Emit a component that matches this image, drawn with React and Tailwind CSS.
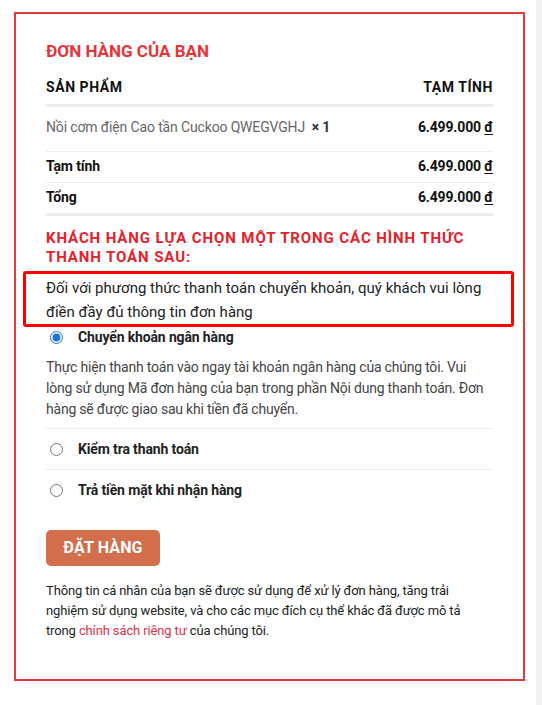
import React from 'react';

const rows = [
  { label: 'Tạm tính', value: '6.499.000', thick: false },
  { label: 'Tổng', value: '6.499.000', thick: true },
];

const Price = ({ value }) => (
  <span className="font-bold text-[#111]">
    {value} <span className="underline underline-offset-2">đ</span>
  </span>
);

const Radio = ({ label, checked }) => (
  <label className="flex items-center leading-[20px]">
    <input
      type="radio"
      name="payment"
      defaultChecked={checked}
      className="m-0 ml-[4px] h-[13px] w-[13px] accent-[#1a73e8]"
    />
    <span className="ml-[15px] text-[14px] font-bold tracking-[-0.01em] text-[#222]">{label}</span>
  </label>
);

const App = () => {
  return (
    <div className="flex min-h-screen bg-white font-['Roboto',sans-serif]">
      <div className="flex-1 pl-[14px] pt-[12px] pb-[25px]">
        <div className="w-[511px] border-2 border-[#e13a3a] px-[30px] pt-[25px] pb-[38px]">
          <h3 className="text-[17px] font-bold leading-[24px] text-[#e5343a]">ĐƠN HÀNG CỦA BẠN</h3>

          {/* order table */}
          <div className="mt-[14px] flex justify-between border-b-[3px] border-[#ececec] pb-[7px] text-[14px] font-bold uppercase leading-[20px] tracking-[0.04em] text-[#111]">
            <span>Sản phẩm</span>
            <span>Tạm tính</span>
          </div>
          <div className="flex justify-between border-b border-[#ececec] pt-[10px] pb-[14px] text-[14px] leading-[20px] tracking-[-0.01em]">
            <span className="text-[#666]">
              Nồi cơm điện Cao tần Cuckoo QWEGVGHJ&nbsp; <strong className="text-[#333]">× 1</strong>
            </span>
            <Price value="6.499.000" />
          </div>
          {rows.map((r) => (
            <div
              key={r.label}
              className={`flex justify-between pt-[4px] pb-[6px] text-[14px] leading-[20px] tracking-[-0.01em] ${
                r.thick ? 'border-b-[3px]' : 'border-b'
              } border-[#ececec]`}
            >
              <span className="font-bold text-[#111]">{r.label}</span>
              <Price value={r.value} />
            </div>
          ))}

          {/* payment methods */}
          <h4 className="mt-[13px] text-[15px] font-bold uppercase leading-[19px] tracking-[0.06em] text-[#e5202a]">
            Khách hàng lựa chọn một trong các hình thức thanh toán sau:
          </h4>
          <div className="mt-[4px] -ml-[23px] -mr-[21px] rounded-[3px] border-[3px] border-[#ff0000] pl-[20px] pt-[2px] text-[15px] leading-[24px] text-[#222]">
            Đối với phương thức thanh toán chuyển khoản, quý khách vui lòng điền đầy đủ thông tin đơn hàng
          </div>

          <div className="border-b border-[#ececec] pb-[8px]">
            <Radio label="Chuyển khoản ngân hàng" checked />
            <p className="mt-[10px] text-[14px] leading-[21px] tracking-[-0.015em] text-[#444]">
              Thực hiện thanh toán vào ngay tài khoản ngân hàng của chúng tôi. Vui lòng sử dụng Mã đơn hàng của bạn trong phần Nội dung thanh toán. Đơn hàng sẽ được giao sau khi tiền đã chuyển.
            </p>
          </div>
          <div className="border-b border-[#ececec] py-[10px]">
            <Radio label="Kiểm tra thanh toán" />
          </div>
          <div className="py-[10px]">
            <Radio label="Trả tiền mặt khi nhận hàng" />
          </div>

          <button className="mt-[20px] h-[36px] w-[114px] rounded-[5px] bg-[#d26e4b] text-[16px] font-bold tracking-[0.01em] text-white">
            ĐẶT HÀNG
          </button>

          <p className="mt-[15px] text-[13px] leading-[20px] tracking-[-0.01em] text-[#222]">
            Thông tin cá nhân của bạn sẽ được sử dụng để xử lý đơn hàng, tăng trải nghiệm sử dụng website, và cho các mục đích cụ thể khác đã được mô tả trong{' '}
            <a href="#" className="text-[#e0314b]">chính sách riêng tư</a> của chúng tôi.
          </p>
        </div>
      </div>
      <div className="w-[6px] bg-[#f1f1f1]" />
    </div>
  );
};

export default App;
